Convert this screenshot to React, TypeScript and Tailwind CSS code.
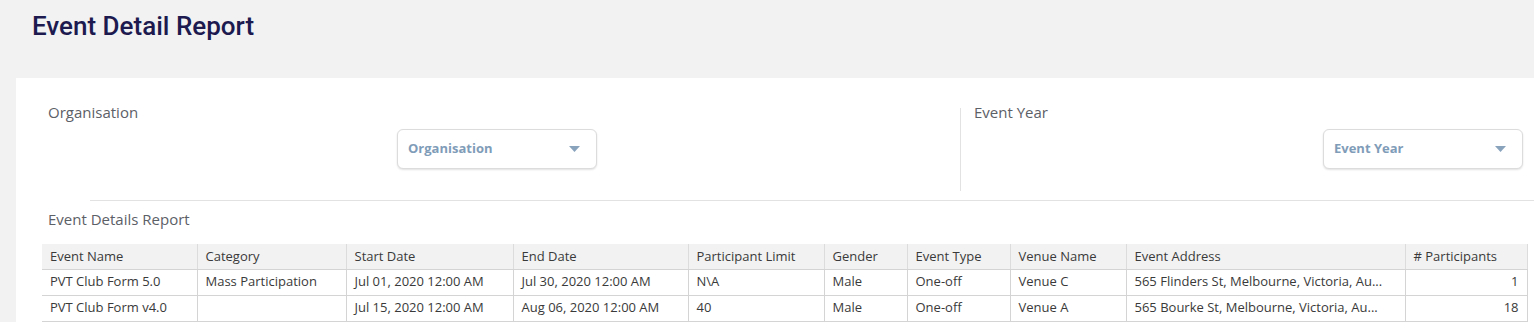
import React from "react";

const cols = [
  { name: "Event Name", w: 155 },
  { name: "Category", w: 149 },
  { name: "Start Date", w: 167 },
  { name: "End Date", w: 175 },
  { name: "Participant Limit", w: 136 },
  { name: "Gender", w: 83 },
  { name: "Event Type", w: 103 },
  { name: "Venue Name", w: 116 },
  { name: "Event Address", w: 279 },
  { name: "# Participants", w: 122 },
];

const rows = [
  [
    "PVT Club Form 5.0",
    "Mass Participation",
    "Jul 01, 2020 12:00 AM",
    "Jul 30, 2020 12:00 AM",
    "N\\A",
    "Male",
    "One-off",
    "Venue C",
    "565 Flinders St, Melbourne, Victoria, Au...",
    "1",
  ],
  [
    "PVT Club Form v4.0",
    "",
    "Jul 15, 2020 12:00 AM",
    "Aug 06, 2020 12:00 AM",
    "40",
    "Male",
    "One-off",
    "Venue A",
    "565 Bourke St, Melbourne, Victoria, Au...",
    "18",
  ],
];

function Dropdown({ label }: { label: string }) {
  return (
    <div className="flex h-[40px] w-[200px] items-center justify-between rounded-[6px] border border-[#dcdcdc] bg-white pl-[10px] pr-[16px] shadow-[0_1px_2px_rgba(0,0,0,0.12)]">
      <span className="text-[13px] font-bold text-[#7f9cb8]">{label}</span>
      <svg width="11" height="6" viewBox="0 0 11 6">
        <path d="M0 0 L11 0 L5.5 6 Z" fill="#89a3bd" />
      </svg>
    </div>
  );
}

export default function App() {
  return (
    <div
      className="min-h-screen bg-[#f2f2f2]"
      style={{ fontFamily: "'Open Sans', 'Liberation Sans', sans-serif" }}
    >
      <div className="h-[78px] pl-[32px] pt-[11px]">
        <h1
          className="text-[26px] font-medium leading-[31px] text-[#1c1a4f]"
          style={{ fontFamily: "Roboto, 'Liberation Sans', sans-serif" }}
        >
          Event Detail Report
        </h1>
      </div>
      <div className="ml-[16px] bg-white pb-[10px]">
        <div className="flex pt-[24px]">
          <div className="w-[944px] pb-[22px] pl-[32px]">
            <div className="text-[15px] leading-[20px] text-[#5c6067]">Organisation</div>
            <div className="mt-[7px] pl-[349px]">
              <Dropdown label="Organisation" />
            </div>
          </div>
          <div className="flex flex-1">
            <div className="mt-[6px] w-px bg-[#e2e2e2]" />
            <div className="flex-1 pl-[13px]">
              <div className="text-[15px] leading-[20px] text-[#5c6067]">Event Year</div>
              <div className="mt-[7px] flex justify-end pr-[11px]">
                <Dropdown label="Event Year" />
              </div>
            </div>
          </div>
        </div>
        <div className="ml-[74px] mt-[9px] h-px bg-[#e2e2e2]" />
        <div className="pl-[32px] pt-[8px] text-[15px] leading-[20px] text-[#5c6067]">
          Event Details Report
        </div>
        <div className="ml-[26px] mt-[15px]">
          <table className="table-fixed border-collapse text-[13px] text-[#3a3a3a]">
            <colgroup>
              {cols.map((c) => (
                <col key={c.name} style={{ width: c.w }} />
              ))}
            </colgroup>
            <thead>
              <tr className="bg-[#f2f2f2]">
                {cols.map((c, i) => (
                  <th
                    key={c.name}
                    className={
                      "h-[25px] border-b border-[#d4d4d4] px-[8px] text-left font-normal " +
                      (i > 0 ? "border-l border-l-[#dcdcdc] " : "") +
                      (i === cols.length - 1 ? "border-r border-r-[#dcdcdc]" : "")
                    }
                  >
                    {c.name}
                  </th>
                ))}
              </tr>
            </thead>
            <tbody>
              {rows.map((r, ri) => (
                <tr key={ri}>
                  {r.map((v, i) => (
                    <td
                      key={i}
                      className={
                        "h-[26px] whitespace-nowrap overflow-hidden border-b border-[#d4d4d4] px-[8px] " +
                        (i > 0 ? "border-l border-l-[#d4d4d4] " : "") +
                        (i === r.length - 1 ? "border-r border-r-[#d4d4d4] text-right" : "")
                      }
                    >
                      {v}
                    </td>
                  ))}
                </tr>
              ))}
            </tbody>
          </table>
        </div>
      </div>
    </div>
  );
}
